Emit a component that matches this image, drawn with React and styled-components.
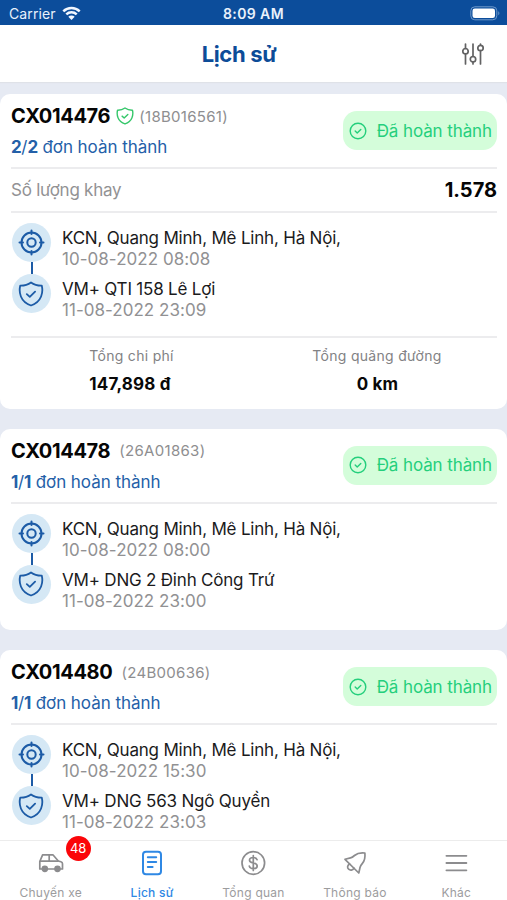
import React from "react";
import styled, { createGlobalStyle } from "styled-components";

const GlobalStyle = createGlobalStyle`
  * {
    box-sizing: border-box;
  }
  body {
    margin: 0;
    background: #e6eaf3;
    font-family: Inter, "Liberation Sans", sans-serif;
  }
  h1, h2, h3, p {
    margin: 0;
  }
`;

const Screen = styled.div`
  width: 507px;
  height: 900px;
  display: flex;
  flex-direction: column;
  overflow: hidden;
  background: #e6eaf3;
`;

const StatusBar = styled.div`
  flex: none;
  height: 25px;
  padding: 2px 7px 0 9px;
  display: grid;
  grid-template-columns: 1fr auto 1fr;
  align-items: center;
  background: #0c4d9b;
  color: #e9f1fb;
  font-size: 14px;
  line-height: 20px;
`;

const Carrier = styled.div`
  display: flex;
  align-items: center;
  gap: 6px;
  letter-spacing: 0.1px;
`;

const Clock = styled.div`
  margin-left: -2px;
  font-weight: 600;
  letter-spacing: 0.4px;
`;

const BatterySlot = styled.div`
  display: flex;
  justify-content: flex-end;
`;

const Header = styled.header`
  flex: none;
  height: 57px;
  padding: 0 23px 0 0;
  display: grid;
  grid-template-columns: 22px 1fr 28px;
  align-items: center;
  background: #ffffff;
  box-shadow: 0 1px 1px #dfe2e8;
  h1 {
    text-align: center;
    color: #0d4c98;
    font-size: 22px;
    font-weight: 700;
    line-height: 28px;
    letter-spacing: -0.35px;
  }
`;

const FilterButton = styled.button`
  display: flex;
  justify-content: flex-end;
  padding: 0;
  border: 0;
  background: none;
`;

const List = styled.main`
  flex: 1;
  min-height: 0;
  overflow: hidden;
  padding-top: 12px;
  display: flex;
  flex-direction: column;
  gap: 20px;
`;

const Card = styled.article`
  flex: none;
  padding: 0 10px 0 11px;
  border-radius: 10px;
  background: #ffffff;
`;

const CardHead = styled.div`
  height: 75px;
  padding-top: 9px;
  display: flex;
  justify-content: space-between;
  align-items: flex-start;
  border-bottom: 2px solid #ececee;
`;

const TripLine = styled.div`
  display: flex;
  align-items: center;
  height: 26px;
  h2 {
    color: #050505;
    font-size: 20px;
    font-weight: 700;
    line-height: 26px;
    letter-spacing: -0.35px;
  }
  svg {
    margin: 0 -4px 0 6px;
  }
  span {
    margin-left: 9px;
    color: #8e8e90;
    font-size: 15px;
    letter-spacing: 0.3px;
  }
`;

const OrderCount = styled.p`
  margin-top: 6px;
  color: #2460a8;
  font-size: 17px;
  line-height: 24px;
  letter-spacing: -0.05px;
  b {
    font-weight: 700;
    letter-spacing: -0.4px;
  }
`;

const Status = styled.div`
  width: 154px;
  height: 39px;
  margin-top: 8px;
  padding: 0 5px 0 6px;
  display: flex;
  align-items: center;
  justify-content: space-between;
  border-radius: 14px;
  background: #d4fdda;
  color: #24cf7c;
  font-size: 17px;
  letter-spacing: -0.1px;
  white-space: nowrap;
`;

const TrayRow = styled.div`
  height: 44px;
  display: flex;
  align-items: center;
  justify-content: space-between;
  border-bottom: 2px solid #ececee;
  color: #929294;
  font-size: 17px;
  letter-spacing: -0.25px;
  strong {
    color: #050505;
    font-size: 20px;
    font-weight: 700;
    letter-spacing: 0;
  }
`;

const Route = styled.div`
  padding: 10px 0 ${props => (props.$compact ? "22.5px" : "26.5px")} 1px;
`;

const Stop = styled.div`
  height: ${props => (props.$last ? "39px" : "51px")};
  display: flex;
  gap: 11px;
`;

const StopMarker = styled.div`
  width: 39px;
  display: flex;
  flex-direction: column;
  align-items: center;
`;

const Bubble = styled.div`
  flex: none;
  width: 39px;
  height: 39px;
  padding-right: 1px;
  display: flex;
  align-items: center;
  justify-content: center;
  border-radius: 50%;
  background: #d5e8f5;
`;

const Connector = styled.div`
  width: 2px;
  flex: 1;
  background: #1c5ba6;
`;

const StopText = styled.div`
  padding-top: 5px;
  h3 {
    color: #1b1b1c;
    font-size: 17px;
    font-weight: 400;
    line-height: 21px;
    letter-spacing: -0.2px;
    white-space: nowrap;
  }
  p {
    color: #919193;
    font-size: 17px;
    line-height: 21px;
    letter-spacing: 0.03px;
  }
`;

const Totals = styled.div`
  height: 73px;
  padding-top: 8px;
  display: grid;
  grid-template-columns: 1fr 1fr;
  border-top: 2px solid #ececee;
  text-align: center;
`;

const Total = styled.div`
  padding-left: ${props => (props.$wide ? "5px" : "0")};
  p {
    padding-right: 2px;
    color: #828284;
    font-size: 14px;
    line-height: 20px;
    letter-spacing: 0.3px;
  }
  strong {
    display: block;
    margin-top: 7px;
    padding-right: ${props => (props.$wide ? "1px" : "5px")};
    color: #080808;
    font-size: 17px;
    font-weight: 700;
    line-height: 22px;
    letter-spacing: 0.2px;
  }
`;

const TabBar = styled.nav`
  flex: none;
  height: 60px;
  display: grid;
  grid-template-columns: repeat(5, 1fr);
  border-top: 1px solid #ececec;
  background: #ffffff;
`;

const Tab = styled.div`
  display: flex;
  flex-direction: column;
  align-items: center;
  color: ${props => (props.$active ? "#2f88e4" : "#8c8c8e")};
  span {
    margin-top: 14px;
    color: ${props => (props.$active ? "#2f88e4" : "#9c9c9e")};
    font-size: 12px;
    font-weight: ${props => (props.$active ? 500 : 400)};
    line-height: 16px;
    letter-spacing: 0.25px;
    white-space: nowrap;
  }
`;

const TabIcon = styled.div`
  position: relative;
  height: 30px;
  padding-top: 9px;
`;

const Badge = styled.b`
  position: absolute;
  top: -5px;
  left: 28px;
  width: 25px;
  height: 25px;
  border-radius: 50%;
  background: #fb0509;
  color: #ffffff;
  font-size: 13px;
  font-weight: 400;
  line-height: 25px;
  text-align: center;
`;

const WifiIcon = () => (
  <svg width="19" height="15" viewBox="0 0 19 15" fill="none" stroke="#f2f7ff" strokeWidth="2.5">
    <path d="M1.3 5.3a11.8 11.8 0 0 1 16.4 0" />
    <path d="M4.3 8.4a7.5 7.5 0 0 1 10.4 0" />
    <path d="M9.5 14 6.3 10.8a4.6 4.6 0 0 1 6.4 0Z" fill="#f2f7ff" stroke="none" />
  </svg>
);

const BatteryIcon = () => (
  <svg width="30" height="15" viewBox="0 0 30 15">
    <rect x="0.8" y="0.8" width="26" height="13" rx="4" fill="none" stroke="#6f99cb" />
    <rect x="2.5" y="2.5" width="22.5" height="9.6" rx="2.3" fill="#ffffff" />
    <path d="M28.3 5.3c1.4.7 1.4 3.3 0 4Z" fill="#6f99cb" />
  </svg>
);

const SlidersIcon = () => (
  <svg width="22" height="22" viewBox="0 0 22 22" fill="none" stroke="#626263" strokeWidth="1.7" strokeLinecap="round">
    <path d="M3.5 1v4.5M3.5 11v10M11 1v12.5M11 19v2M18.5 1v1.2M18.5 7.7V21" />
    <circle cx="3.5" cy="8.2" r="2.7" />
    <circle cx="11" cy="16.2" r="2.7" />
    <circle cx="18.5" cy="5" r="2.7" />
  </svg>
);

const ShieldIcon = ({ size = 26, color = "#1c5ba6", weight = 1.8 }) => (
  <svg width={size} height={size} viewBox="0 0 26 26" fill="none" stroke={color} strokeWidth={weight} strokeLinecap="round" strokeLinejoin="round">
    <path d="M13 1.5c3 2.2 6.7 3.3 10.8 3.2.8 3.3.7 7.2-.7 10.8-1.7 4.2-5.3 7.4-10.1 9-4.8-1.6-8.4-4.8-10.1-9C1.5 11.9 1.4 8 2.2 4.7 6.3 4.8 10 3.7 13 1.5Z" />
    <path d="m8.8 13.2 3 2.7 5.3-5.2" />
  </svg>
);

const TargetIcon = () => (
  <svg width="27" height="27" viewBox="0 0 27 27" fill="none" stroke="#1c5ba6" strokeWidth="2" strokeLinecap="round">
    <circle cx="13.5" cy="13.5" r="10" />
    <circle cx="13.5" cy="13.5" r="4.2" />
    <path d="M13.5 1.5v3.5M13.5 22v3.5M1.5 13.5H5M22 13.5h3.5" />
  </svg>
);

const CheckIcon = () => (
  <svg width="18" height="18" viewBox="0 0 18 18" fill="none" stroke="#24cf7c" strokeWidth="1.4" strokeLinecap="round" strokeLinejoin="round">
    <circle cx="9" cy="9" r="7.8" />
    <path d="m6.2 9.1 2 1.9 3.6-3.6" />
  </svg>
);

const CarIcon = () => (
  <svg width="26" height="26" viewBox="0 0 26 26" fill="none" stroke="currentColor" strokeWidth="1.7" strokeLinejoin="round">
    <path d="M4.5 19H1.8v-7.5L4.6 4.8h10.3l5.4 6.2 2.6.8c1 .3 1.6 1 1.6 2V19H22M9 19h8.500" />
    <path d="M1.8 11.200h18.700M11.200 4.800v6.400" />
    <circle cx="6.800" cy="18.800" r="2.500" fill="currentColor" />
    <circle cx="19.500" cy="18.800" r="2.500" fill="currentColor" />
  </svg>
);

const DocIcon = () => (
  <svg width="22" height="26" viewBox="0 0 22 26" fill="none" stroke="currentColor" strokeWidth="2" strokeLinecap="round">
    <rect x="2" y="1.700" width="18" height="22.500" rx="3" />
    <path d="M6.800 7.200h8.400M6.800 12h8.400M6.800 16.900h4.800" />
  </svg>
);

const DollarIcon = () => (
  <svg width="26" height="26" viewBox="0 0 26 26" fill="none" stroke="currentColor" strokeWidth="1.700" strokeLinecap="round">
    <circle cx="13.300" cy="13" r="11.300" />
    <path d="M17.100 9.700c-.5-1.400-1.900-2.200-3.800-2.200-2.200 0-3.800 1-3.800 2.700 0 3.900 7.700 1.700 7.700 5.700 0 1.700-1.700 2.700-3.900 2.700-2.100 0-3.600-.9-4-2.500M13.300 5.500v15" />
  </svg>
);

const BellIcon = () => (
  <svg width="26" height="26" viewBox="0 0 26 26" fill="none" stroke="currentColor" strokeWidth="1.700" strokeLinecap="round" strokeLinejoin="round">
    <path d="M3 9.300 16.800 23l1.200-5.500c.3-1.300 1-2.500 2.400-4.100 2.200-2.600 3-5.300 2.500-10.400-4.800-.6-7.800.3-10.400 2.500-1.500 1.300-2.500 2-4 2.400Z" />
    <path d="M7.500 13.800c-2.200 1.800-2.500 4-.9 5.400 1.700 1.500 4 1.100 5.500-.9" />
  </svg>
);

const MenuIcon = () => (
  <svg width="24" height="26" viewBox="0 0 24 26" stroke="currentColor" strokeWidth="1.800" strokeLinecap="round">
    <path d="M2.400 5.800h20M2.400 13h20M2.400 20.300h20" />
  </svg>
);

const trips = [
  {
    code: "CX014476",
    plate: "18B016561",
    done: 2,
    total: 2,
    verified: true,
    trays: "1.578",
    stops: [
      { name: "KCN, Quang Minh, Mê Linh, Hà Nội,", time: "10-08-2022 08:08" },
      { name: "VM+ QTI 158 Lê Lợi", time: "11-08-2022 23:09" }
    ],
    cost: "147,898 đ",
    distance: "0 km"
  },
  {
    code: "CX014478",
    plate: "26A01863",
    done: 1,
    total: 1,
    stops: [
      { name: "KCN, Quang Minh, Mê Linh, Hà Nội,", time: "10-08-2022 08:00" },
      { name: "VM+ DNG 2 Đinh Công Trứ", time: "11-08-2022 23:00" }
    ]
  },
  {
    code: "CX014480",
    plate: "24B00636",
    done: 1,
    total: 1,
    stops: [
      { name: "KCN, Quang Minh, Mê Linh, Hà Nội,", time: "10-08-2022 15:30" },
      { name: "VM+ DNG 563 Ngô Quyền", time: "11-08-2022 23:03" }
    ]
  }
];

const tabs = [
  { label: "Chuyến xe", icon: <CarIcon />, badge: 48 },
  { label: "Lịch sử", icon: <DocIcon />, active: true },
  { label: "Tổng quan", icon: <DollarIcon /> },
  { label: "Thông báo", icon: <BellIcon /> },
  { label: "Khác", icon: <MenuIcon /> }
];

const TripCard = ({ trip }) => (
  <Card>
    <CardHead>
      <div>
        <TripLine>
          <h2>{trip.code}</h2>
          {trip.verified && <ShieldIcon size={18} color="#35c76a" weight={2} />}
          <span>({trip.plate})</span>
        </TripLine>
        <OrderCount>
          <b>{trip.done}</b>/<b>{trip.total}</b> đơn hoàn thành
        </OrderCount>
      </div>
      <Status>
        <CheckIcon />
        Đã hoàn thành
      </Status>
    </CardHead>
    {trip.trays && (
      <TrayRow>
        Số lượng khay
        <strong>{trip.trays}</strong>
      </TrayRow>
    )}
    <Route $compact={!!trip.cost}>
      {trip.stops.map((stop, i) => {
        const last = i === trip.stops.length - 1;
        return (
          <Stop key={stop.time} $last={last}>
            <StopMarker>
              <Bubble>{last ? <ShieldIcon /> : <TargetIcon />}</Bubble>
              {!last && <Connector />}
            </StopMarker>
            <StopText>
              <h3>{stop.name}</h3>
              <p>{stop.time}</p>
            </StopText>
          </Stop>
        );
      })}
    </Route>
    {trip.cost && (
      <Totals>
        <Total>
          <p>Tổng chi phí</p>
          <strong>{trip.cost}</strong>
        </Total>
        <Total $wide>
          <p>Tổng quãng đường</p>
          <strong>{trip.distance}</strong>
        </Total>
      </Totals>
    )}
  </Card>
);

const App = () => {
  return (
    <>
      <GlobalStyle />
      <Screen>
        <StatusBar>
          <Carrier>
            Carrier
            <WifiIcon />
          </Carrier>
          <Clock>8:09 AM</Clock>
          <BatterySlot>
            <BatteryIcon />
          </BatterySlot>
        </StatusBar>
        <Header>
          <div />
          <h1>Lịch sử</h1>
          <FilterButton>
            <SlidersIcon />
          </FilterButton>
        </Header>
        <List>
          {trips.map(trip => (
            <TripCard key={trip.code} trip={trip} />
          ))}
        </List>
        <TabBar>
          {tabs.map(tab => (
            <Tab key={tab.label} $active={tab.active}>
              <TabIcon>
                {tab.icon}
                {tab.badge && <Badge>{tab.badge}</Badge>}
              </TabIcon>
              <span>{tab.label}</span>
            </Tab>
          ))}
        </TabBar>
      </Screen>
    </>
  );
};

export default App;
